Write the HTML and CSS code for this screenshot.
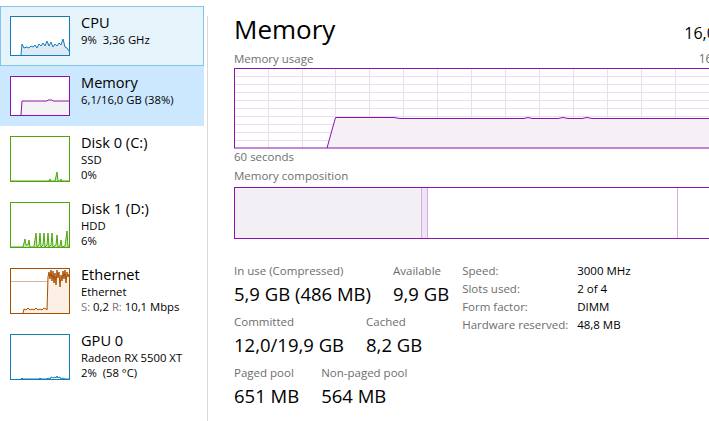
FILE: index.html
```html
<!DOCTYPE html>
<html lang="en">
<head>
    <meta charset="UTF-8">
    <title>Task Manager - Memory</title>
    <link rel="stylesheet" href="styles.css">
</head>
<body>
    <div class="app">
        <nav class="sidebar">
            <div class="item hover">
                <div class="thumb cpu">
                    <svg width="58" height="38">
                        <polygon class="area" points="10,38 11,27 13,31 16,30 18,31 20,29 22,30 24,28 26,31 28,27 30,29 32,26 34,29 36,24 38,29 40,25 42,30 44,27 46,29 48,26 50,28 52,22 54,30 56,31 58,34 58,38"/>
                        <polyline class="line" points="10,38 11,27 13,31 16,30 18,31 20,29 22,30 24,28 26,31 28,27 30,29 32,26 34,29 36,24 38,29 40,25 42,30 44,27 46,29 48,26 50,28 52,22 54,30 56,31 58,34"/>
                    </svg>
                </div>
                <div class="info">
                    <div class="name">CPU</div>
                    <div class="sub">9%&nbsp; 3,36 GHz</div>
                </div>
            </div>
            <div class="item selected">
                <div class="thumb mem">
                    <svg width="58" height="38">
                        <polygon class="area" points="10,38 11,24 36,24 37,23 41,23 42,24 58,24 58,38"/>
                        <polyline class="line" points="10,38 11,24 36,24 37,23 41,23 42,24 58,24"/>
                    </svg>
                </div>
                <div class="info">
                    <div class="name">Memory</div>
                    <div class="sub">6,1/16,0 GB (38%)</div>
                </div>
            </div>
            <div class="item tall">
                <div class="thumb disk">
                    <svg width="58" height="44">
                        <polygon class="area" points="0,44 38,44 39,42 40,44 44,44 46,35 47,44 49,44 50,42 51,44 58,44"/>
                        <polyline class="line" points="0,44 38,44 39,42 40,44 44,44 46,35 47,44 49,44 50,42 51,44 58,44"/>
                    </svg>
                </div>
                <div class="info">
                    <div class="name">Disk 0 (C:)</div>
                    <div class="sub">SSD</div>
                    <div class="sub">0%</div>
                </div>
            </div>
            <div class="item tall">
                <div class="thumb disk">
                    <svg width="58" height="44">
                        <polygon class="area" points="0,44 12,44 14,36 15,42 17,42 18,37 19,44 23,44 25,30 26,44 28,42 29,30 30,44 32,42 33,30 34,44 36,42 37,30 38,44 40,42 41,30 42,44 45,42 46,32 47,44 49,43 50,37 51,44 54,43 56,28 57,44 58,44"/>
                        <polyline class="line" points="0,44 12,44 14,36 15,42 17,42 18,37 19,44 23,44 25,30 26,44 28,42 29,30 30,44 32,42 33,30 34,44 36,42 37,30 38,44 40,42 41,30 42,44 45,42 46,32 47,44 49,43 50,37 51,44 54,43 56,28 57,44 58,44"/>
                    </svg>
                </div>
                <div class="info">
                    <div class="name">Disk 1 (D:)</div>
                    <div class="sub">HDD</div>
                    <div class="sub">6%</div>
                </div>
            </div>
            <div class="item tall">
                <div class="thumb net">
                    <svg width="58" height="44">
                        <line class="scale" x1="0" y1="12.5" x2="58" y2="12.5"/>
                        <polygon class="area" points="12,44 13,40 15,41 17,39 19,41 21,40 23,41 25,39 27,41 29,40 31,41 33,39 35,40 36,41 37,8 38,3 39,10 40,1 41,12 42,2 43,14 44,4 45,16 46,1 47,9 48,3 49,18 50,6 51,12 52,2 53,10 54,1 55,14 56,3 57,8 58,5 58,44"/>
                        <polyline class="line" points="12,44 13,40 15,41 17,39 19,41 21,40 23,41 25,39 27,41 29,40 31,41 33,39 35,40 36,41 37,8 38,3 39,10 40,1 41,12 42,2 43,14 44,4 45,16 46,1 47,9 48,3 49,18 50,6 51,12 52,2 53,10 54,1 55,14 56,3 57,8 58,5"/>
                    </svg>
                </div>
                <div class="info">
                    <div class="name">Ethernet</div>
                    <div class="sub">Ethernet</div>
                    <div class="sub"><span class="muted">S:</span> 0,2 <span class="muted">R:</span> 10,1 Mbps</div>
                </div>
            </div>
            <div class="item tall">
                <div class="thumb gpu">
                    <svg width="58" height="44">
                        <polyline class="line" points="10,44 11,43 12,44 28,44 29,43 30,44 36,44 37,43 39,44 40,42 42,43 44,42 45,43 46,41 47,43 49,42 50,44 52,43 54,44 58,44"/>
                    </svg>
                </div>
                <div class="info">
                    <div class="name">GPU 0</div>
                    <div class="sub">Radeon RX 5500 XT</div>
                    <div class="sub">2%&nbsp; (58 °C)</div>
                </div>
            </div>
        </nav>

        <div class="divider"></div>

        <main class="panel">
            <header class="head">
                <h1>Memory</h1>
                <span class="total">16,0 GB</span>
            </header>

            <div class="graph-caption">
                <span>Memory usage</span>
                <span class="max">16,0 GB</span>
            </div>
            <svg class="usage" width="508" height="81">
                <rect class="bg" x="0.5" y="0.5" width="507" height="80"/>
                <g class="grid">
                    <line x1="34.5" y1="0" x2="34.5" y2="80"/>
                    <line x1="68.5" y1="0" x2="68.5" y2="80"/>
                    <line x1="101.5" y1="0" x2="101.5" y2="80"/>
                    <line x1="135.5" y1="0" x2="135.5" y2="80"/>
                    <line x1="169.5" y1="0" x2="169.5" y2="80"/>
                    <line x1="203.5" y1="0" x2="203.5" y2="80"/>
                    <line x1="237.5" y1="0" x2="237.5" y2="80"/>
                    <line x1="271.5" y1="0" x2="271.5" y2="80"/>
                    <line x1="305.5" y1="0" x2="305.5" y2="80"/>
                    <line x1="339.5" y1="0" x2="339.5" y2="80"/>
                    <line x1="373.5" y1="0" x2="373.5" y2="80"/>
                    <line x1="407.5" y1="0" x2="407.5" y2="80"/>
                    <line x1="441.5" y1="0" x2="441.5" y2="80"/>
                    <line x1="475.5" y1="0" x2="475.5" y2="80"/>
                    <line x1="0" y1="8.5" x2="508" y2="8.5"/>
                    <line x1="0" y1="16.5" x2="508" y2="16.5"/>
                    <line x1="0" y1="24.5" x2="508" y2="24.5"/>
                    <line x1="0" y1="32.5" x2="508" y2="32.5"/>
                    <line x1="0" y1="40.5" x2="508" y2="40.5"/>
                    <line x1="0" y1="48.5" x2="508" y2="48.5"/>
                    <line x1="0" y1="56.5" x2="508" y2="56.5"/>
                    <line x1="0" y1="64.5" x2="508" y2="64.5"/>
                    <line x1="0" y1="72.5" x2="508" y2="72.5"/>
                </g>
                <polygon class="area" points="93,80 101.5,49.5 160,49.5 166,50.5 290,50.5 294,49.5 298,50.5 324,50.5 329,49.5 334,50.5 348,50.5 353,49.5 358,50.5 508,50.5 508,80"/>
                <polyline class="line" points="93,80 101.5,49.5 160,49.5 166,50.5 290,50.5 294,49.5 298,50.5 324,50.5 329,49.5 334,50.5 348,50.5 353,49.5 358,50.5 508,50.5"/>
                <rect class="frame" x="0.5" y="0.5" width="507" height="79.5"/>
            </svg>
            <div class="axis">60 seconds</div>

            <div class="caption">Memory composition</div>
            <div class="composition">
                <div class="seg in-use"></div>
                <div class="seg modified"></div>
                <div class="seg standby"></div>
                <div class="seg free"></div>
            </div>

            <section class="stats">
                <div class="figures">
                    <div class="row">
                        <div class="stat">
                            <div class="label">In use (Compressed)</div>
                            <div class="value">5,9 GB (486 MB)</div>
                        </div>
                        <div class="stat">
                            <div class="label">Available</div>
                            <div class="value">9,9 GB</div>
                        </div>
                    </div>
                    <div class="row">
                        <div class="stat">
                            <div class="label">Committed</div>
                            <div class="value">12,0/19,9 GB</div>
                        </div>
                        <div class="stat">
                            <div class="label">Cached</div>
                            <div class="value">8,2 GB</div>
                        </div>
                    </div>
                    <div class="row">
                        <div class="stat">
                            <div class="label">Paged pool</div>
                            <div class="value">651 MB</div>
                        </div>
                        <div class="stat">
                            <div class="label">Non-paged pool</div>
                            <div class="value">564 MB</div>
                        </div>
                    </div>
                </div>

                <dl class="details">
                    <dt>Speed:</dt><dd>3000 MHz</dd>
                    <dt>Slots used:</dt><dd>2 of 4</dd>
                    <dt>Form factor:</dt><dd>DIMM</dd>
                    <dt>Hardware reserved:</dt><dd>48,8 MB</dd>
                </dl>
            </section>
        </main>
    </div>
</body>
</html>
```

FILE: styles.css
```css
body {
    margin: 0;
    padding: 0;
    background: #fff;
    color: #000;
    font-family: 'Open Sans', 'Noto Sans', sans-serif;
    overflow: hidden;
    height: 421px;
}

.app {
    display: flex;
    height: 100%;
}

/* left list */

.sidebar {
    flex: none;
    width: 204px;
    padding-top: 6px;
}

.item {
    display: flex;
    align-items: flex-start;
    box-sizing: border-box;
    height: 60px;
    padding-left: 9px;
    border: 1px solid transparent;
}

.item.tall {
    height: 66px;
}

.item.hover {
    background: #e5f3fb;
    border-color: #84c5ef;
}

.item.selected {
    background: #cce8ff;
    border-color: #cce8ff;
}

.thumb {
    flex: none;
    width: 60px;
    height: 40px;
    box-sizing: border-box;
    margin-top: 9px;
    border: 1px solid;
    background: #fff;
}

.tall .thumb {
    height: 46px;
}

.thumb svg {
    display: block;
}

.thumb .line {
    fill: none;
    stroke-width: 1;
}

.cpu, .gpu { border-color: #117dbb; }
.cpu .line, .gpu .line { stroke: #117dbb; }
.cpu .area { fill: #dde9f4; }

.mem { border-color: #8b12ae; }
.mem .line { stroke: #8b12ae; }
.mem .area { fill: #f4f2f4; }

.disk { border-color: #4da60c; }
.disk .line { stroke: #4da60c; }
.disk .area { fill: #c9e4b5; }

.net { border-color: #a74f01; }
.net .line { stroke: #a74f01; }
.net .area { fill: #fcf0e4; }
.net .scale { stroke: #d9b595; }

.info {
    margin-left: 11px;
    margin-top: 5px;
}

.name {
    font-size: 14.6px;
    line-height: 20px;
}

.sub {
    font-size: 11.3px;
    line-height: 15px;
}

.muted {
    color: #777;
}

.divider {
    flex: none;
    width: 1px;
    margin: 16px 0 0 3px;
    background: #dadada;
}

/* right panel */

.panel {
    flex: none;
    width: 508px;
    padding: 12px 0 0 26px;
}

.head {
    display: flex;
    justify-content: space-between;
    align-items: baseline;
}

h1 {
    margin: 0;
    font-size: 26px;
    font-weight: normal;
    line-height: 34px;
}

.total {
    font-size: 16px;
}

.graph-caption {
    display: flex;
    justify-content: space-between;
    margin-top: 5px;
    font-size: 11.5px;
    line-height: 16px;
    color: #707070;
}

.graph-caption .max {
    font-size: 12px;
}

.usage {
    display: block;
    margin-top: 1px;
}

.usage .bg { fill: #fff; stroke: none; }
.usage .grid line { stroke: #ecdbf1; stroke-width: 1; }
.usage .area { fill: #f4f0f5; }
.usage .line { fill: none; stroke: #8b12ae; stroke-width: 1; }
.usage .frame { fill: none; stroke: #8b12ae; stroke-width: 1; }

.axis,
.caption {
    font-size: 11.5px;
    line-height: 16px;
    color: #707070;
}

.caption {
    margin-top: 3px;
}

.composition {
    display: flex;
    height: 52px;
    box-sizing: border-box;
    margin-top: 3px;
    border: 1px solid #8b12ae;
    border-right: none;
}

.seg {
    box-sizing: border-box;
}

.in-use {
    width: 186px;
    background: #f3f0f5;
}

.modified {
    width: 7px;
    background: #efe4f3;
    border-left: 1px solid #d6addf;
    border-right: 1px solid #d6addf;
}

.standby {
    width: 250px;
    border-right: 1px solid #d6addf;
}

.free {
    flex: 1;
}

.stats {
    display: flex;
    align-items: flex-start;
    gap: 13px;
    margin-top: 24px;
}

.figures {
    flex: none;
}

.row {
    display: flex;
    gap: 22px;
    margin-bottom: 8px;
}

.label {
    font-size: 11.5px;
    line-height: 16px;
    color: #6d6d6d;
}

.value {
    margin-top: 3px;
    font-size: 18.5px;
    line-height: 24px;
}

.details {
    display: grid;
    grid-template-columns: 115px auto;
    margin: -1px 0 0;
    font-size: 11.5px;
    line-height: 18px;
}

.details dt {
    color: #6d6d6d;
}

.details dd {
    margin: 0;
    white-space: nowrap;
}
```
